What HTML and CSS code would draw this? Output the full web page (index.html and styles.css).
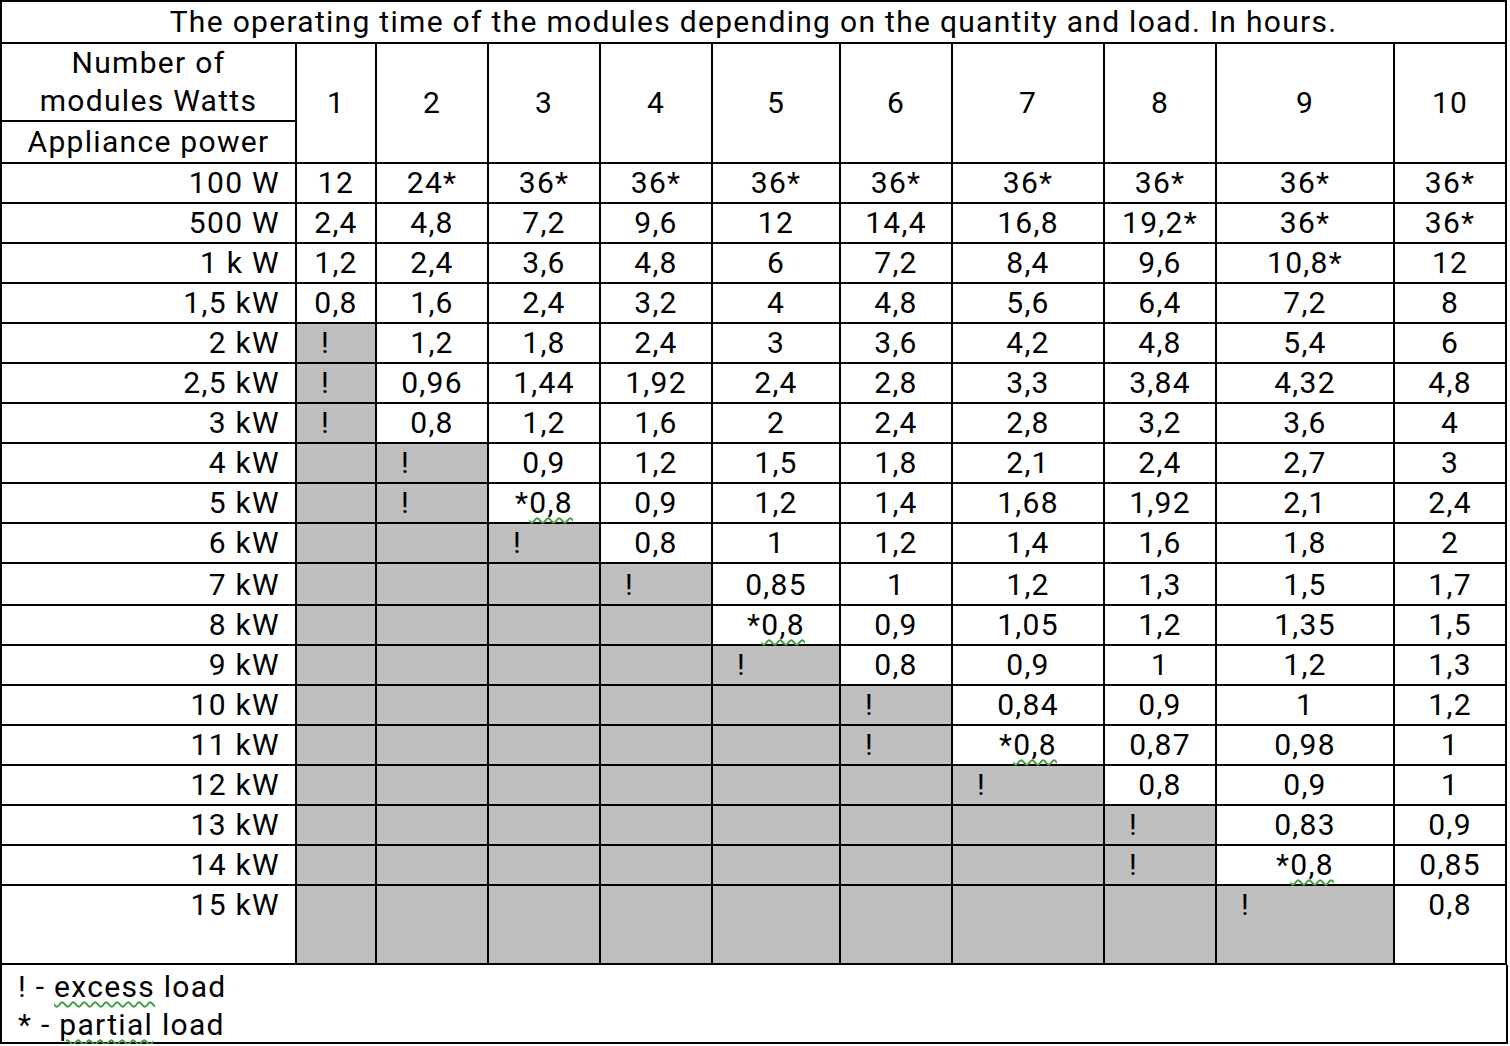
FILE: index.html
```html
<!DOCTYPE html>
<html lang="en">
<head>
    <meta charset="UTF-8">
    <title>Module operating time</title>
    <link rel="stylesheet" href="styles.css">
</head>
<body>

<div class="sheet">
    <table class="grid">
        <colgroup>
            <col style="width:295px"><col style="width:80px"><col style="width:112px"><col style="width:112px"><col style="width:112px">
            <col style="width:128px"><col style="width:112px"><col style="width:152px"><col style="width:112px"><col style="width:178px"><col style="width:112px">
        </colgroup>
        <tr class="title-row">
            <td colspan="11" class="title">The operating time of the modules depending on the quantity and load. In hours.</td>
        </tr>
        <tr class="head-top">
            <td class="corner">Number of<br>modules Watts</td>
            <td rowspan="2" class="num">1</td>
            <td rowspan="2" class="num">2</td>
            <td rowspan="2" class="num">3</td>
            <td rowspan="2" class="num">4</td>
            <td rowspan="2" class="num">5</td>
            <td rowspan="2" class="num">6</td>
            <td rowspan="2" class="num">7</td>
            <td rowspan="2" class="num">8</td>
            <td rowspan="2" class="num">9</td>
            <td rowspan="2" class="num">10</td>
        </tr>
        <tr class="head-bottom">
            <td class="corner">Appliance power</td>
        </tr>
        <tr><td class="label">100 W</td><td>12</td><td>24*</td><td>36*</td><td>36*</td><td>36*</td><td>36*</td><td>36*</td><td>36*</td><td>36*</td><td>36*</td></tr>
        <tr><td class="label">500 W</td><td>2,4</td><td>4,8</td><td>7,2</td><td>9,6</td><td>12</td><td>14,4</td><td>16,8</td><td>19,2*</td><td>36*</td><td>36*</td></tr>
        <tr><td class="label">1 k W</td><td>1,2</td><td>2,4</td><td>3,6</td><td>4,8</td><td>6</td><td>7,2</td><td>8,4</td><td>9,6</td><td>10,8*</td><td>12</td></tr>
        <tr><td class="label">1,5 kW</td><td>0,8</td><td>1,6</td><td>2,4</td><td>3,2</td><td>4</td><td>4,8</td><td>5,6</td><td>6,4</td><td>7,2</td><td>8</td></tr>
        <tr><td class="label">2 kW</td><td class="off warn">!</td><td>1,2</td><td>1,8</td><td>2,4</td><td>3</td><td>3,6</td><td>4,2</td><td>4,8</td><td>5,4</td><td>6</td></tr>
        <tr><td class="label">2,5 kW</td><td class="off warn">!</td><td>0,96</td><td>1,44</td><td>1,92</td><td>2,4</td><td>2,8</td><td>3,3</td><td>3,84</td><td>4,32</td><td>4,8</td></tr>
        <tr><td class="label">3 kW</td><td class="off warn">!</td><td>0,8</td><td>1,2</td><td>1,6</td><td>2</td><td>2,4</td><td>2,8</td><td>3,2</td><td>3,6</td><td>4</td></tr>
        <tr><td class="label">4 kW</td><td class="off"></td><td class="off warn">!</td><td>0,9</td><td>1,2</td><td>1,5</td><td>1,8</td><td>2,1</td><td>2,4</td><td>2,7</td><td>3</td></tr>
        <tr><td class="label">5 kW</td><td class="off"></td><td class="off warn">!</td><td>*<span class="spell">0,8</span></td><td>0,9</td><td>1,2</td><td>1,4</td><td>1,68</td><td>1,92</td><td>2,1</td><td>2,4</td></tr>
        <tr><td class="label">6 kW</td><td class="off"></td><td class="off"></td><td class="off warn">!</td><td>0,8</td><td>1</td><td>1,2</td><td>1,4</td><td>1,6</td><td>1,8</td><td>2</td></tr>
        <tr class="tall-row"><td class="label">7 kW</td><td class="off"></td><td class="off"></td><td class="off"></td><td class="off warn">!</td><td>0,85</td><td>1</td><td>1,2</td><td>1,3</td><td>1,5</td><td>1,7</td></tr>
        <tr><td class="label">8 kW</td><td class="off"></td><td class="off"></td><td class="off"></td><td class="off"></td><td>*<span class="spell">0,8</span></td><td>0,9</td><td>1,05</td><td>1,2</td><td>1,35</td><td>1,5</td></tr>
        <tr><td class="label">9 kW</td><td class="off"></td><td class="off"></td><td class="off"></td><td class="off"></td><td class="off warn">!</td><td>0,8</td><td>0,9</td><td>1</td><td>1,2</td><td>1,3</td></tr>
        <tr><td class="label">10 kW</td><td class="off"></td><td class="off"></td><td class="off"></td><td class="off"></td><td class="off"></td><td class="off warn">!</td><td>0,84</td><td>0,9</td><td>1</td><td>1,2</td></tr>
        <tr><td class="label">11 kW</td><td class="off"></td><td class="off"></td><td class="off"></td><td class="off"></td><td class="off"></td><td class="off warn">!</td><td>*<span class="spell">0,8</span></td><td>0,87</td><td>0,98</td><td>1</td></tr>
        <tr><td class="label">12 kW</td><td class="off"></td><td class="off"></td><td class="off"></td><td class="off"></td><td class="off"></td><td class="off"></td><td class="off warn">!</td><td>0,8</td><td>0,9</td><td>1</td></tr>
        <tr><td class="label">13 kW</td><td class="off"></td><td class="off"></td><td class="off"></td><td class="off"></td><td class="off"></td><td class="off"></td><td class="off"></td><td class="off warn">!</td><td>0,83</td><td>0,9</td></tr>
        <tr><td class="label">14 kW</td><td class="off"></td><td class="off"></td><td class="off"></td><td class="off"></td><td class="off"></td><td class="off"></td><td class="off"></td><td class="off warn">!</td><td>*<span class="spell">0,8</span></td><td>0,85</td></tr>
        <tr class="last-row"><td class="label">15 kW</td><td class="off"></td><td class="off"></td><td class="off"></td><td class="off"></td><td class="off"></td><td class="off"></td><td class="off"></td><td class="off"></td><td class="off warn">!</td><td>0,8</td></tr>
    </table>

    <!-- Legend -->
    <div class="legend">
        <div>! - <span class="spell">excess</span> load</div>
        <div>* - <span class="spell">partial</span> load</div>
    </div>
</div>

</body>
</html>
```

FILE: styles.css
```css
body, html {
    margin: 0;
    background-color: #fff;
    font-family: Roboto, "Liberation Sans", sans-serif;
    color: #000;
}

.sheet {
    width: 1508px;
}

/* Main table */
.grid {
    border-collapse: collapse;
    table-layout: fixed;
    width: 1506px;
    font-size: 30px;
    letter-spacing: 1.3px;
}

.grid td {
    border: 2px solid #000;
    height: 36px;
    padding: 0 4px;
    line-height: 38px;
    text-align: center;
    vertical-align: top;
    white-space: nowrap;
}

.title-row td {
    height: 39px;
    line-height: 40px;
}

.head-top .corner {
    height: 74px;
    line-height: 38px;
}

.head-bottom .corner {
    height: 38px;
    line-height: 40px;
}

.grid td.num {
    vertical-align: middle;
}

.grid td.label {
    text-align: right;
    padding-right: 15px;
}

/* Grey cells where the load is too big */
.grid td.off {
    background-color: #c0bfc0;
}

.grid td.warn {
    text-align: left;
    padding-left: 24px;
}

.grid .tall-row td {
    padding-top: 2px;
    line-height: 38px;
}

.last-row td {
    height: 77px;
}

/* Spell-check squiggle */
.spell {
    text-decoration: underline wavy #3f9b3f;
    text-decoration-thickness: 1.5px;
    text-underline-offset: 4px;
}

/* Legend */
.legend {
    border: 2px solid #000;
    border-top: none;
    height: 74px;
    padding: 3px 16px 0;
    font-size: 30px;
    line-height: 38px;
    letter-spacing: 1.3px;
}
```
